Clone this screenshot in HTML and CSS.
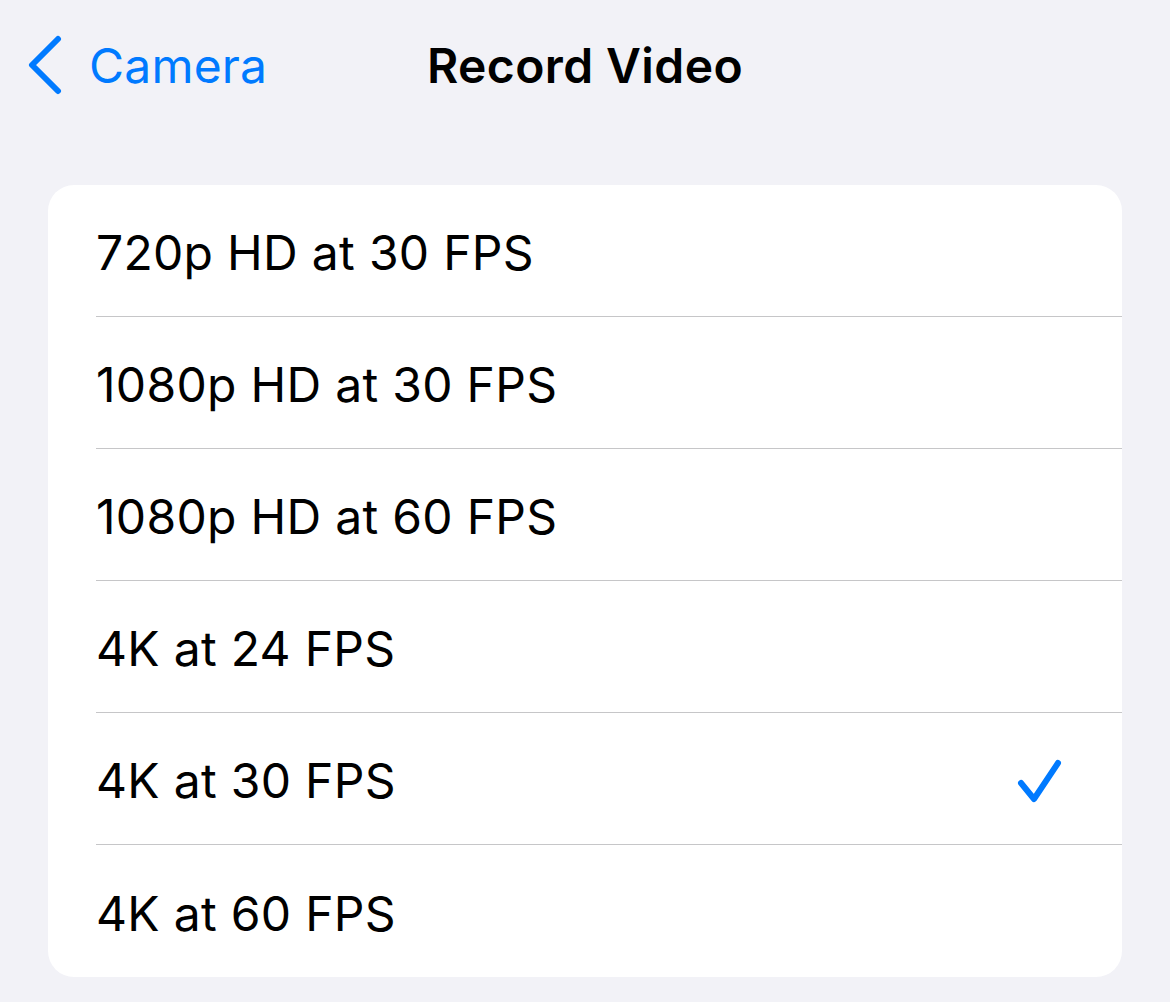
FILE: index.html
```html
<!DOCTYPE html>
<html lang="en">
<head>
  <meta charset="UTF-8" />
  <title>Record Video</title>
  <link rel="stylesheet" href="styles.css">
</head>
<body>

  <div class="nav">
    <a class="back" href="#">
      <svg class="chevron" width="36" height="60" viewBox="0 0 36 60">
        <polyline points="30,4 4,30 30,56" fill="none" stroke="#007aff" stroke-width="6" stroke-linecap="round" stroke-linejoin="round"/>
      </svg>
      <span>Camera</span>
    </a>
    <div class="title">Record Video</div>
    <div></div>
  </div>

  <div class="group">
    <div class="row"><div class="row-inner">720p HD at 30 FPS</div></div>
    <div class="row"><div class="row-inner">1080p HD at 30 FPS</div></div>
    <div class="row"><div class="row-inner">1080p HD at 60 FPS</div></div>
    <div class="row"><div class="row-inner">4K at 24 FPS</div></div>
    <div class="row">
      <div class="row-inner">
        <span>4K at 30 FPS</span>
        <svg class="check" width="48" height="48" viewBox="0 0 48 48">
          <polyline points="5,26 18,42 42,6" fill="none" stroke="#007aff" stroke-width="6" stroke-linecap="round" stroke-linejoin="round"/>
        </svg>
      </div>
    </div>
    <div class="row"><div class="row-inner">4K at 60 FPS</div></div>
  </div>

</body>
</html>
```

FILE: styles.css
```css
body {
  margin: 0;
  background: #f2f2f7;
  font-family: Inter, "Noto Sans", sans-serif;
  color: #000;
}

.nav {
  height: 130px;
  display: grid;
  grid-template-columns: 1fr auto 1fr;
  align-items: center;
}

.back {
  display: flex;
  align-items: center;
  gap: 25px;
  padding-left: 28px;
  color: #007aff;
  text-decoration: none;
  font-size: 48px;
  letter-spacing: 0.2px;
}

.title {
  font-size: 48px;
  font-weight: 600;
  letter-spacing: 0.4px;
}

.group {
  margin: 55px 48px 0;
  background: #fff;
  border-radius: 26px;
  overflow: hidden;
}

.row {
  padding-left: 48px;
}

.row-inner {
  height: 132px;
  border-bottom: 1px solid #c6c6c8;
  display: flex;
  align-items: center;
  justify-content: space-between;
  padding: 4px 58px 0 0;
  box-sizing: border-box;
  font-size: 48px;
  letter-spacing: 0.3px;
}

.row:last-child .row-inner {
  border-bottom: none;
}
```
